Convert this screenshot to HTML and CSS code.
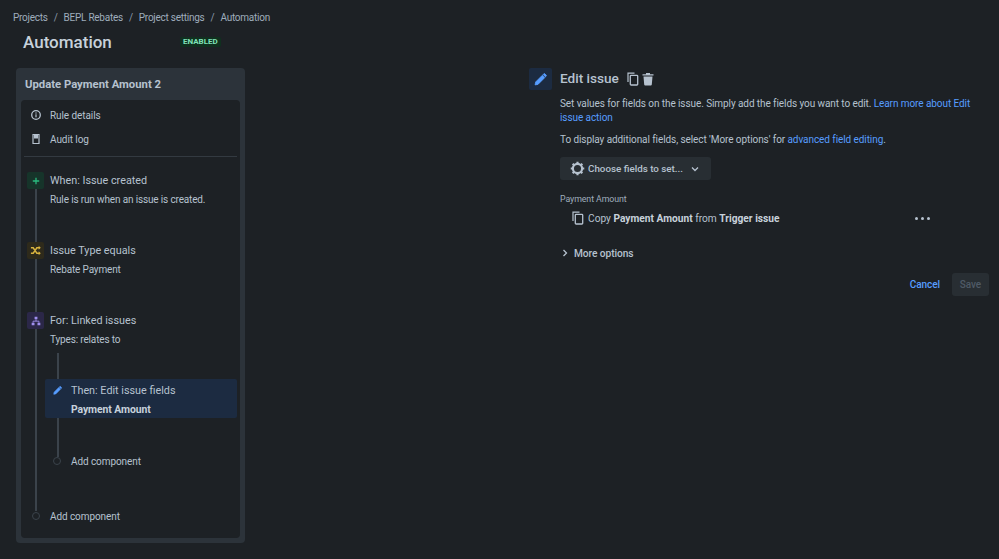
FILE: index.html
```html
<!DOCTYPE html>
<html lang="en">
<head>
<meta charset="utf-8">
<title>Automation</title>
<link rel="stylesheet" href="styles.css">
</head>
<body>
<nav class="crumbs"><span>Projects</span><i>/</i><span>BEPL Rebates</span><i>/</i><span>Project settings</span><i>/</i><span>Automation</span></nav>
<header class="head"><h1>Automation</h1><span class="badge">ENABLED</span></header>
<main class="main">
  <aside class="panel">
    <h2>Update Payment Amount 2</h2>
    <div class="inner">
      <div class="menu">
        <div class="menu-row">
          <svg class="mi" viewBox="0 0 12 12"><circle cx="6" cy="6" r="4.300" fill="none" stroke="#b6c2cf" stroke-width="1.300"/><rect x="5.400" y="5.300" width="1.200" height="3" fill="#b6c2cf"/><rect x="5.400" y="3.400" width="1.200" height="1.200" fill="#b6c2cf"/></svg>
          <span>Rule details</span>
        </div>
        <div class="menu-row">
          <svg class="mi" viewBox="0 0 12 12"><path d="M3 1.500h6v9H3z" fill="none" stroke="#b6c2cf" stroke-width="1.200"/><path d="M4 2h4v3.500H4z" fill="#b6c2cf"/></svg>
          <span>Audit log</span>
        </div>
      </div>
      <div class="flow">
        <div class="rail"></div>
        <div class="step">
          <div class="ico green"><svg viewBox="0 0 10 10" width="8" height="8"><path d="M5 1v8M1 5h8" stroke="#2abb7f" stroke-width="1.600"/></svg></div>
          <div><div class="t">When: Issue created</div><div class="s">Rule is run when an issue is created.</div></div>
        </div>
        <div class="step">
          <div class="ico yellow"><svg viewBox="0 0 12 12" width="11" height="11"><path d="M1 3h2.500l4 6H10M1 9h2.500l4-6H10" fill="none" stroke="#d9b43f" stroke-width="1.600"/><path d="M9.500 .8l2.200 2.200-2.200 2.200zM9.500 6.800l2.200 2.200-2.200 2.200z" fill="#d9b43f"/></svg></div>
          <div><div class="t">Issue Type equals</div><div class="s">Rebate Payment</div></div>
        </div>
        <div class="step short">
          <div class="ico purple"><svg viewBox="0 0 12 12" width="10" height="10"><path d="M4.300 1h3.400v3H4.300zM.8 8h3.400v3H.8zM7.800 8h3.400v3H7.800z" fill="#9f8fef"/><path d="M6 4v2.200M2.500 8V6.200h7V8" fill="none" stroke="#9f8fef" stroke-width="1.100"/></svg></div>
          <div><div class="t">For: Linked issues</div><div class="s">Types: relates to</div></div>
        </div>
        <div class="nested">
          <div class="rail2"></div>
          <div class="active">
            <svg class="pen" viewBox="0 0 12 12"><path d="M1.500 8.300 7.700 2.100l2.200 2.200-6.200 6.200-2.700.5zM8.400 1.400l.6-.6a.8.8 0 0 1 1.100 0l1.100 1.100a.8.8 0 0 1 0 1.100l-.6.6z" fill="#579dff" stroke="#579dff" stroke-width=".9"/></svg>
            <div><div class="t">Then: Edit issue fields</div><div class="b">Payment Amount</div></div>
          </div>
          <div class="add add-in"><span class="dot"></span><span>Add component</span></div>
        </div>
        <div class="add add-out"><span class="dot"></span><span>Add component</span></div>
      </div>
    </div>
  </aside>
  <section class="detail">
    <div class="dhead">
      <div class="dico"><svg viewBox="0 0 12 12" width="13" height="13"><path d="M1.500 8.300 7.700 2.100l2.200 2.200-6.200 6.200-2.700.5zM8.400 1.400l.6-.6a.8.8 0 0 1 1.100 0l1.100 1.100a.8.8 0 0 1 0 1.100l-.6.6z" fill="#579dff" stroke="#579dff" stroke-width=".7"/></svg></div>
      <h3>Edit issue</h3>
      <svg class="copy" viewBox="0 0 12 14"><path d="M1 10V1.200h6.500" fill="none" stroke="#b6c2cf" stroke-width="1.200"/><rect x="3.300" y="3.300" width="7.400" height="9.700" rx=".8" fill="none" stroke="#b6c2cf" stroke-width="1.300"/></svg>
      <svg class="trash" viewBox="0 0 12 14"><path d="M.5 2.200h11v1.400H.5zM4 1h4v1.400H4zM1.500 4.400h9l-.7 8.100a1 1 0 0 1-1 .9H3.200a1 1 0 0 1-1-.9z" fill="#b6c2cf"/></svg>
    </div>
    <div class="body">
      <p class="p1">Set values for fields on the issue. Simply add the fields you want to edit. <a>Learn more about Edit</a> <a>issue action</a></p>
      <p class="p2">To display additional fields, select 'More options' for <a>advanced field editing</a>.</p>
      <button class="choose">
        <svg viewBox="0 0 14 14" width="15" height="15"><circle cx="7" cy="7" r="4.300" fill="none" stroke="#b6c2cf" stroke-width="2"/><path d="M7 .7v2.400M7 10.900v2.400M.7 7h2.400M10.900 7h2.400M2.500 2.500l1.700 1.700M9.800 9.800l1.700 1.700M2.500 11.500l1.700-1.700M9.800 4.200l1.700-1.700" stroke="#b6c2cf" stroke-width="2"/></svg>
        <span>Choose fields to set...</span>
        <svg class="chev" viewBox="0 0 8 6" width="8" height="6"><path d="M1 1.500 4 4.500l3-3" fill="none" stroke="#b6c2cf" stroke-width="1.300"/></svg>
      </button>
      <div class="label">Payment Amount</div>
      <div class="field">
        <svg class="fcopy" viewBox="0 0 12 14"><path d="M1 10V1.200h6.500" fill="none" stroke="#b6c2cf" stroke-width="1.200"/><rect x="3.300" y="3.300" width="7.400" height="9.700" rx=".8" fill="none" stroke="#b6c2cf" stroke-width="1.300"/></svg>
        <span>Copy <b>Payment Amount</b> from <b>Trigger issue</b></span>
        <span class="dots"><i></i><i></i><i></i></span>
      </div>
      <div class="more">
        <svg viewBox="0 0 6 8" width="6" height="8"><path d="M1.500 1 4.500 4l-3 3" fill="none" stroke="#b6c2cf" stroke-width="1.300"/></svg>
        <span>More options</span>
      </div>
      <div class="actions"><a>Cancel</a><span class="save">Save</span></div>
    </div>
  </section>
</main>
</body>
</html>
```
FILE: styles.css
```css
* { box-sizing: border-box; }
html, body { margin: 0; height: 100%; }
body {
  background: #1d2125;
  color: #b6c2cf;
  font-family: Roboto, "Noto Sans", sans-serif;
  font-size: 10px;
  letter-spacing: -0.08px;
  overflow: hidden;
}
.crumbs {
  height: 25px;
  padding: 11px 0 0 13px;
  display: flex;
  gap: 6px;
  line-height: 13px;
  color: #9fadbc;
  letter-spacing: -0.25px;
}
.crumbs i { font-style: normal; color: #8c9bab; }
.head {
  height: 34px;
  margin-bottom: 9px;
  display: flex;
  align-items: center;
  padding-left: 23px;
}
.head h1 {
  margin: 0;
  width: 157px;
  font-size: 17px;
  letter-spacing: 0;
  font-weight: 500;
  color: #c7d1db;
}
.badge {
  background: #10301f;
  color: #7ee2b8;
  font-size: 8px;
  letter-spacing: 0;
  font-weight: 700;
  line-height: 10px;
  padding: 0 3px;
  border-radius: 2px;
}
.main { display: flex; align-items: flex-start; }
.panel {
  width: 229px;
  height: 475px;
  margin-left: 16px;
  background: #2c333a;
  border-radius: 4px;
  padding: 0 5px 5px;
  display: flex;
  flex-direction: column;
}
.panel h2 {
  margin: 0;
  height: 32px;
  padding: 9px 4px 0;
  line-height: 15px;
  font-size: 11.3px;
  letter-spacing: 0;
  font-weight: 700;
  color: #b6c2cf;
}
.inner {
  flex: 1;
  background: #1d2125;
  border-radius: 4px;
  padding: 0 3px;
  display: flex;
  flex-direction: column;
}
.menu { border-bottom: 1px solid #333a41; height: 57px; padding-top: 3px; }
.menu-row { height: 24px; display: flex; align-items: center; padding-left: 6px; gap: 8px; }
.mi { width: 12px; height: 12px; }
.flow { position: relative; padding-top: 15px; }
.rail { position: absolute; left: 11px; top: 31px; width: 2px; height: 323px; background: #3b434b; }
.rail2 { position: absolute; left: 12px; top: -26px; width: 2px; height: 104px; background: #3b434b; }
.step { display: flex; gap: 6px; height: 70px; position: relative; }
.step.short { height: 67px; }
.ico {
  width: 17px;
  height: 17px;
  margin-left: 3px;
  border-radius: 2px;
  display: flex;
  align-items: center;
  justify-content: center;
  flex: none;
}
.green { background: #16342a; }
.yellow { background: #2e2a1b; }
.purple { background: #2b2748; }
.t { line-height: 16px; margin-top: 1px; color: #b6c2cf; font-size: 10.8px; letter-spacing: 0; }
.s { line-height: 16px; margin-top: 3px; color: #b6c2cf; letter-spacing: -0.15px; }
.nested { position: relative; margin-left: 21px; height: 112px; }
.active {
  position: relative;
  width: 192px;
  height: 39px;
  background: #1c2b41;
  border-radius: 2px;
  display: flex;
  gap: 9px;
  padding: 3px 0 0 8px;
}
.pen { width: 9px; height: 11px; margin-top: 3px; flex: none; }
.b { line-height: 16px; margin-top: 3px; font-weight: 700; font-size: 10.400px; color: #c7d1db; }
.add { display: flex; align-items: center; height: 16px; position: relative; }
.dot {
  width: 8px;
  height: 8px;
  border-radius: 50%;
  border: 1.500px solid #3b434b;
  background: #1d2125;
  flex: none;
}
.add-in { margin-top: 35px; padding-left: 8px; gap: 10px; }
.add-out { margin-top: 17px; padding-left: 8px; gap: 10px; }
.detail { margin-left: 284px; width: 460px; padding-top: 0; }
.dhead { display: flex; align-items: center; height: 22px; }
.dico {
  width: 23px;
  height: 22px;
  background: #1c2b41;
  border-radius: 2px;
  display: flex;
  align-items: center;
  justify-content: center;
}
.dhead h3 {
  margin: 0 0 2px 8px;
  font-size: 13.600px;
  letter-spacing: 0;
  font-weight: 500;
  color: #b6c2cf;
}
.copy { width: 12px; height: 14px; margin-left: 8px; }
.trash { width: 12px; height: 14px; margin-left: 3px; }
.body { padding-left: 31px; }
.body p { margin: 0; line-height: 14px; color: #b6c2cf; }
.p1 { padding-top: 7px; }
.p2 { margin-top: 8px !important; }
a { color: #579dff; }
.choose {
  margin-top: 10px;
  height: 23px;
  width: 151px;
  border: 0;
  border-radius: 3px;
  background: #282e33;
  color: #b6c2cf;
  font: 500 9.800px Roboto, sans-serif;
  display: flex;
  align-items: center;
  padding: 0 0 0 10px;
  gap: 3px;
  white-space: nowrap;
}
.chev { margin-left: 5px; }
.label { margin-top: 13px; font-size: 8.800px; line-height: 12px; color: #9fadbc; }
.field { display: flex; align-items: center; height: 22px; margin-top: 2px; padding-left: 12px; font-size: 10.200px; letter-spacing: 0; }
.fcopy { width: 12px; height: 14px; margin-right: 4px; }
.field b { font-weight: 700; color: #c7d1db; }
.dots { margin-left: auto; margin-right: 59px; display: flex; gap: 3px; }
.dots i { width: 3px; height: 3px; border-radius: 50%; background: #b6c2cf; }
.more { display: flex; align-items: center; gap: 6px; margin-top: 16px; height: 16px; padding-left: 2px; font-weight: 500; font-size: 10.200px; }
.actions { display: flex; align-items: center; justify-content: flex-end; gap: 12px; margin-top: 12px; }
.actions a { font-weight: 500; }
.save {
  background: #282e33;
  color: #4f5a66;
  font-weight: 500;
  height: 23px;
  width: 37px;
  border-radius: 3px;
  display: flex;
  align-items: center;
  justify-content: center;
}
```
